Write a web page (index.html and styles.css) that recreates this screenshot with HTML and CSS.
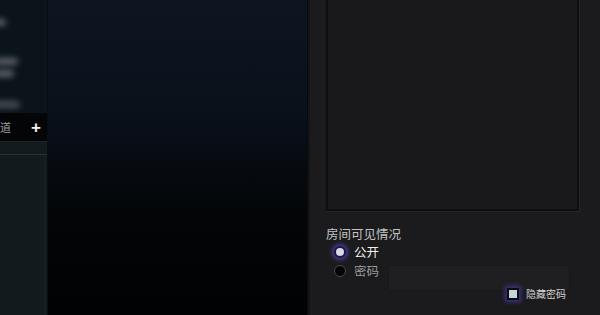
FILE: index.html
```html
<!DOCTYPE html>
<html>
<head lang="zh">
    <meta charset="UTF-8">
    <title>创建房间</title>
    <link rel="stylesheet" href="styles.css">
</head>
<body>
<div class="app">
    <div class="side">
        <div class="side-top">
            <span class="blob b1"></span>
            <span class="blob b2"></span>
            <span class="blob b3"></span>
            <span class="blob b4"></span>
        </div>
        <div class="side-head">
            <span class="side-title">频道</span>
            <span class="side-add">+</span>
        </div>
        <div class="side-sub"></div>
        <div class="side-body"></div>
    </div>
    <div class="stage"></div>
    <div class="panel">
        <div class="preview"></div>
        <div class="vis">
            <p class="vis-title">房间可见情况</p>
            <label class="opt">
                <span class="radio on"></span>
                <span class="opt-text on">公开</span>
            </label>
            <label class="opt">
                <span class="radio"></span>
                <span class="opt-text">密码</span>
                <span class="pwd"></span>
            </label>
            <label class="hide">
                <span class="check"></span>
                <span class="hide-text">隐藏密码</span>
            </label>
        </div>
    </div>
</div>
</body>
</html>
```
FILE: styles.css
```css
body, p {
    margin: 0;
    padding: 0;
}
body {
    background: #000;
    font-family: "Noto Sans CJK SC", "Liberation Sans", sans-serif;
    overflow: hidden;
}
.app {
    display: flex;
    width: 600px;
    height: 315px;
}
/* left column */
.side {
    width: 47px;
    display: flex;
    flex-direction: column;
    background: #0c141b;
    border-right: 1px solid #0a0d10;
    overflow: hidden;
}
.side-top {
    height: 113px;
    position: relative;
    background: #0b131b;
}
/* blurred list labels scrolled out on the left */
.blob {
    position: absolute;
    left: -6px;
    height: 7px;
    border-radius: 4px;
    background: #5e6469;
    filter: blur(3px);
}
.b1 { top: 19px; width: 12px; }
.b2 { top: 58px; width: 24px; }
.b3 { top: 70px; width: 20px; }
.b4 { top: 101px; width: 26px; background: #4a5055; }
.side-head {
    height: 28px;
    background: #040506;
    display: flex;
    align-items: center;
    justify-content: space-between;
    padding-right: 6px;
}
.side-title {
    margin-left: -11px;
    color: #9ea2a4;
    font-size: 11px;
}
.side-add {
    color: #f2f2f2;
    font: bold 17px/1 "Liberation Sans", sans-serif;
}
.side-sub {
    height: 12px;
    background: #141b1e;
    border-top: 1px solid #1e2528;
    border-bottom: 1px solid #2a3033;
}
.side-body {
    flex: 1;
    background: #111a1d;
    border-right: 3px solid #151d20;
}
/* middle */
.stage {
    width: 259px;
    background: linear-gradient(to bottom, #0d1520 0%, #0a111b 35%, #030507 70%, #010203 100%);
    border-right: 1px solid #08090a;
}
/* right panel */
.panel {
    flex: 1;
    background: #1b1b1d;
    border-left: 2px solid #141416;
    padding-left: 16px;
    padding-right: 20px;
}
.preview {
    width: 249px;
    height: 209px;
    background: #19191b;
    border: 2px solid #0e0e0f;
    border-top: 0;
    box-shadow: 1px 1px 0 #262628;
}
.vis {
    padding-top: 14px;
}
.vis-title {
    color: #c2c2c2;
    font-size: 12.5px;
    line-height: 17px;
}
.opt {
    display: flex;
    align-items: center;
    height: 19px;
    padding-left: 8px;
}
.radio {
    width: 10px;
    height: 10px;
    border-radius: 50%;
    background: #050505;
    border: 1px solid #4a4a4c;
}
.radio.on {
    background: #d8d8ea;
    border: 2px solid #1a1740;
    width: 8px;
    height: 8px;
    box-shadow: 0 0 4px 2px #4a3d9a;
}
.opt-text {
    margin-left: 8px;
    color: #9a9a9c;
    font-size: 12.5px;
}
.opt-text.on {
    color: #f0f0f0;
}
.pwd {
    width: 180px;
    height: 24px;
    margin-left: 9px;
    margin-top: 14px;
    background: #1f1f21;
    border: 1px solid #18181a;
}
.hide {
    display: flex;
    align-items: center;
    justify-content: flex-end;
    margin-top: 6px;
    padding-right: 14px;
}
.check {
    width: 8px;
    height: 8px;
    background: #c2d6d6;
    border: 2px solid #0a0a14;
    box-shadow: 0 0 4px 2px #3c3480;
}
.hide-text {
    margin-left: 7px;
    color: #d4d4d4;
    font-size: 10px;
}
```
